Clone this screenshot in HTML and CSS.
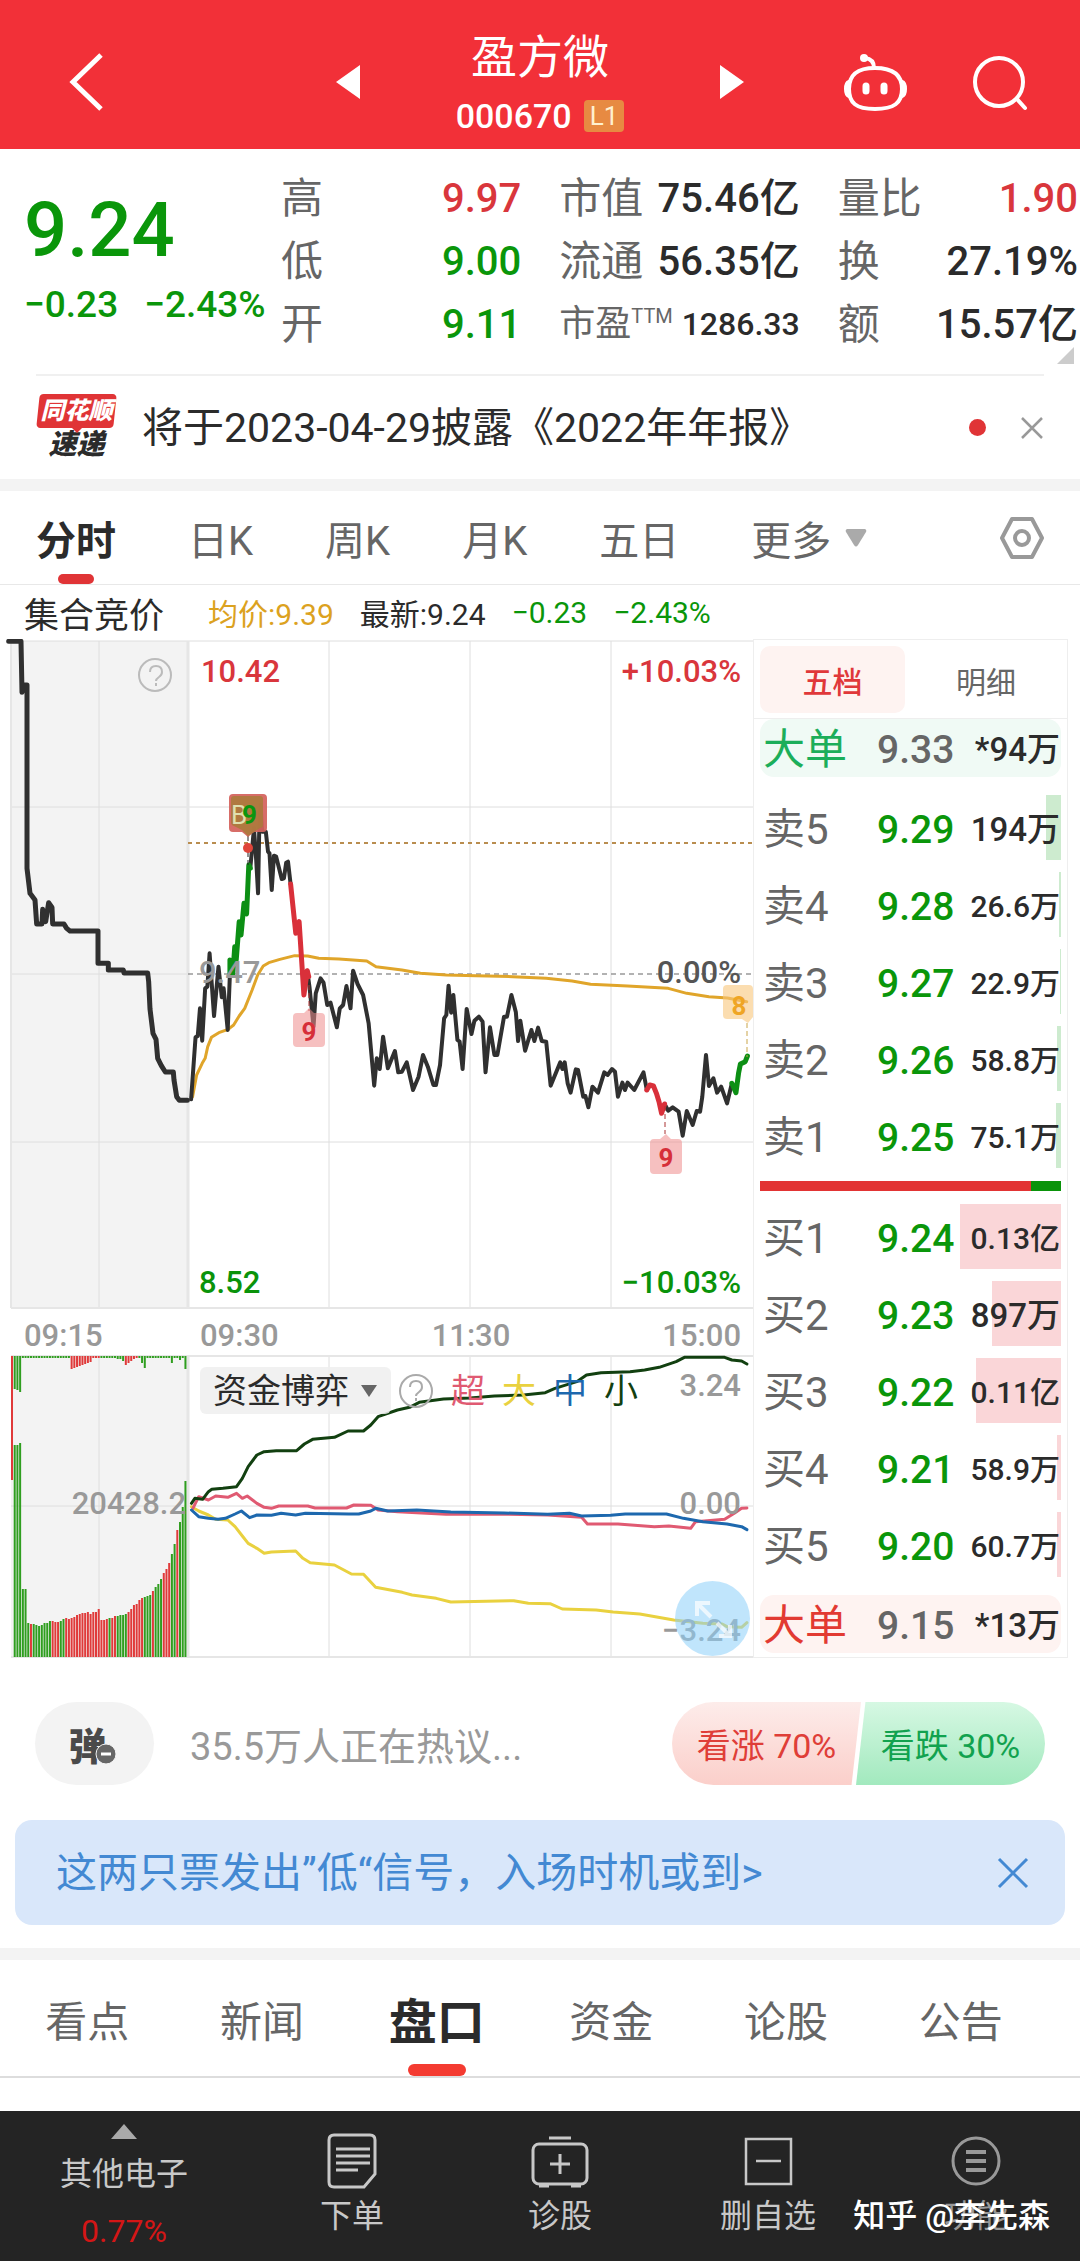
FILE: index.html
```html
<!DOCTYPE html>
<html lang="zh-CN">
<head>
    <meta charset="UTF-8">
    <meta name="viewport" content="width=device-width, initial-scale=1.0">
    <title>盈方微 000670</title>
    <link rel="stylesheet" href="styles.css">
</head>
<body>
    <header class="topbar">
        <button class="icon-btn back" aria-label="返回">
            <svg width="36" height="60" viewBox="0 0 36 60"><path d="M33 3 5 30l28 27" fill="none" stroke="#fff" stroke-width="5"/></svg>
        </button>
        <div class="switcher">
            <button class="icon-btn" aria-label="上一只">
                <svg width="24" height="34" viewBox="0 0 24 34"><path d="M24 0v34L0 17z" fill="#fff"/></svg>
            </button>
            <div class="title">
                <h1>盈方微</h1>
                <div class="code">000670 <span class="level">L1</span></div>
            </div>
            <button class="icon-btn" aria-label="下一只">
                <svg width="24" height="34" viewBox="0 0 24 34"><path d="M0 0v34l24-17z" fill="#fff"/></svg>
            </button>
        </div>
        <div class="actions">
            <button class="icon-btn" aria-label="智能助手">
                <svg width="66" height="60" viewBox="0 0 66 60" fill="none" stroke="#fff" stroke-width="4" stroke-linecap="round">
                    <path d="M31 16c-17 0-26 6-26 21 0 14 7 20 26 20s27-6 27-20c0-15-10-21-27-21z"/>
                    <path d="M5 30q-3 1-3 7t3 7M58 30q3 1 3 7t-3 7"/>
                    <path d="M30 16q0-9-9-10"/>
                    <circle cx="20" cy="6" r="4" fill="#fff" stroke="none"/>
                    <path d="M22 34v5M40 34v5" stroke-width="7"/>
                </svg>
            </button>
            <button class="icon-btn" aria-label="搜索">
                <svg width="60" height="60" viewBox="0 0 60 60" fill="none" stroke="#fff" stroke-width="4" stroke-linecap="round">
                    <circle cx="27" cy="30" r="24"/>
                    <path d="m45 47 8 9"/>
                </svg>
            </button>
        </div>
    </header>

    <section class="quote">
        <div class="price">
            <div class="last">9.24</div>
            <div class="change"><span>−0.23</span><span>−2.43%</span></div>
        </div>
        <div class="stats">
            <dl>
                <div><dt>高</dt><dd class="up">9.97</dd></div>
                <div><dt>低</dt><dd class="down">9.00</dd></div>
                <div><dt>开</dt><dd class="down">9.11</dd></div>
            </dl>
            <dl>
                <div><dt>市值</dt><dd>75.46亿</dd></div>
                <div><dt>流通</dt><dd>56.35亿</dd></div>
                <div class="small"><dt>市盈<sup>TTM</sup></dt><dd>1286.33</dd></div>
            </dl>
            <dl>
                <div><dt>量比</dt><dd class="up">1.90</dd></div>
                <div><dt>换</dt><dd>27.19%</dd></div>
                <div><dt>额</dt><dd>15.57亿</dd></div>
            </dl>
        </div>
        <svg class="corner" width="17" height="17" viewBox="0 0 17 17"><path d="M17 0v17H0z" fill="#ccc"/></svg>
    </section>

    <section class="news">
        <div class="news-logo"><span class="brand">同花顺</span><span class="express">速递</span></div>
        <a class="news-text" href="#">将于2023-04-29披露《2022年年报》</a>
        <span class="dot"></span>
        <button class="icon-btn" aria-label="关闭">
            <svg width="24" height="24" viewBox="0 0 24 24"><path d="m2 2 20 20M22 2 2 22" stroke="#999" stroke-width="2.5"/></svg>
        </button>
    </section>

    <nav class="period">
        <button class="active">分时</button>
        <button>日K</button>
        <button>周K</button>
        <button>月K</button>
        <button>五日</button>
        <button class="more">更多
            <svg width="22" height="18" viewBox="0 0 22 18"><path d="M2 0h18q2 1 1 3l-8 13q-2 3-4 0L1 3Q0 1 2 0z" fill="#aaa"/></svg>
        </button>
        <button class="settings" aria-label="设置">
            <svg width="46" height="44" viewBox="0 0 46 44" fill="none" stroke="#999" stroke-width="4" stroke-linejoin="round">
                <path d="M13 3h20l10 19-10 19H13L3 22z"/>
                <circle cx="23" cy="22" r="7"/>
            </svg>
        </button>
    </nav>

    <div class="summary">
        <span class="auction">集合竞价</span>
        <span class="avg">均价:9.39</span>
        <span>最新:9.24</span>
        <span class="down">−0.23</span>
        <span class="down">−2.43%</span>
    </div>

    <main class="market">
        <div class="charts">
            <svg class="chart" viewBox="0 639 753 1020" role="img" aria-label="分时走势">
                <!-- grid -->
                <path d="M11 641h178v667H11zM11 1356h176v301H11z" fill="#f3f3f3"/>
                <g fill="none" stroke="#dedede">
                    <path d="M11 641h742M11 807h742M11 974h178M11 1142h742M99 641v667M329 641v667M470 641v667M611 641v667M99 1356v301M329 1356v301M470 1356v301M611 1356v301M11 1506h742"/>
                    <path d="M11 1308h742M11 1356h742M11 1657h742M11 641v667" stroke="#e6e6e6" stroke-width="2"/>
                    <path d="M188 641v667M188 1356v301" stroke="#e6e6e6" stroke-width="3"/>
                </g>
                <path d="M188 974h565" stroke="#999" stroke-width="1.5" stroke-dasharray="5 4"/>
                <path d="M188 843h565" stroke="#b98d4f" stroke-width="2" stroke-dasharray="4 4"/>

                <!-- call auction -->
                <svg x="0" y="630" width="400" height="500" viewBox="0 0 1200 1500" class="line">
                    <polyline class="ink auction-line" points="26,34 63,34 66,187 70,165 81,165 81,715 90,790 105,810 110,882 126,882 128,838 137,875 146,818 156,832 158,882 192,882 200,895 210,903 294,903 294,1000 325,1000 325,1020 370,1020 372,1029 443,1029 446,1055 450,1137 459,1210 468,1228 473,1285 484,1307 496,1326 520,1326 522,1350 530,1400 538,1411 562,1411"/>
                </svg>

                <!-- price and average -->
                <svg x="180" y="760" width="580" height="440" viewBox="0 0 1568 1320" preserveAspectRatio="none" class="line">
                    <polyline class="avg-line" points="34,1010 45,945 60,910 68,895 75,860 85,832 105,818 130,808 145,795 160,768 175,745 195,690 210,645 225,618 240,608 270,598 310,587 345,588 375,595 430,597 505,603 530,620 600,630 650,640 720,645 800,647 900,650 990,655 1060,663 1110,673 1210,678 1320,685 1370,700 1430,710 1480,714 1532,725"/>
                    <polyline class="ink" points="30,1018 42,832 48,828 54,745 60,842 68,685 74,680 80,580 92,768 104,620 113,712 118,685 129,810 135,640"/>
                    <polyline class="ink" points="190,325 200,205 206,300 211,400 214,220 218,135 222,215 232,215 238,275 242,280 248,390 254,287 260,290 275,357 281,355 287,308 292,305 299,372"/>
                    <polyline class="ink" points="344,632 350,680 361,800 367,700 380,655 388,668 398,735 407,728 424,802 432,745 441,735 450,678 461,745 468,632 480,672 495,705 510,790 525,977 532,895 540,927 549,830 562,925 581,873 590,937 600,935 613,907 630,990 645,950 657,885 670,920 685,975 692,975 703,915 714,775 720,765 726,677 733,758 739,705 750,840 756,845 764,927 775,747 788,822 796,782 808,770 818,785 826,937 838,802 850,885 858,885 876,770 884,770 896,705 908,757 914,843 920,782 933,872 950,810 958,843 968,803 978,843 990,845 1002,977 1028,907 1034,927 1040,907 1048,970 1056,998 1070,928 1076,930 1090,1010 1096,1008 1104,1042 1115,980 1130,998 1147,937 1156,945 1168,927 1176,935 1184,1010 1196,968 1203,990 1210,968 1228,990 1253,937 1262,990"/>
                    <polyline class="ink" points="1310,1032 1320,1052 1332,1042 1348,1055 1359,1127 1370,1053 1386,1095 1397,1053 1406,1055 1412,1010 1422,885 1430,978 1442,955 1452,998 1463,980 1479,1030 1492,970"/>
                    <polyline class="fall-line" points="135,640 135,600 143,640 148,560 152,600 160,485 165,525 173,430 180,462 186,315 190,325"/>
                    <polyline class="fall-line" points="1492,970 1503,998 1510,940 1515,912 1528,905 1534,888"/>
                    <polyline class="rise-line" points="299,372 313,520 322,485 335,705 344,632 348,650"/>
                    <polyline class="rise-line" points="1262,990 1270,975 1280,978 1288,1000 1295,1025 1302,1060 1310,1032"/>
                </svg>

                <!-- signal markers -->
                <g fill="none" stroke-dasharray="5 3">
                    <path d="M248 836v30" stroke="#222"/>
                    <path d="M309 985v26M665 1106v28" stroke="#a33"/>
                    <path d="M747 1023v34" stroke="#c9a54a"/>
                </g>
                <circle cx="248" cy="848" r="5" fill="#e0453a"/>
                <path d="M233 794h30q4 0 4 4v30q0 4-4 4h-9l-6 5-6-5h-9q-4 0-4-4v-30q0-4 4-4z" fill="#d4625c" fill-opacity=".93"/>
                <path d="M234 796h26q3 0 3 3v26q0 3-3 3l-6 4-6 4-6-6-8-4q-3-1-3-4v-23q0-3 3-3z" fill="#ac7a3c" fill-opacity=".9"/>
                <text x="231" y="824" class="mark pale">B</text>
                <text x="242" y="824" class="mark" fill="#0a960f">9</text>
                <path d="M297 1013h7l5-5 5 5h7q4 0 4 4v26q0 4-4 4h-24q-4 0-4-4v-26q0-4 4-4zM654 1139h6l6-5 5 5h7q4 0 4 4v27q0 4-4 4h-24q-4 0-4-4v-27q0-4 4-4z" fill="#ee8d8d" fill-opacity=".55"/>
                <text x="309" y="1041" class="mark" text-anchor="middle" fill="#d62f39">9</text>
                <text x="666" y="1167" class="mark" text-anchor="middle" fill="#d62f39">9</text>
                <path d="M727 985h22q4 0 4 4v28l-5 6-6-4h-15q-4 0-4-4v-26q0-4 4-4z" fill="#f8c77b" fill-opacity=".6"/>
                <text x="739" y="1015" class="mark" text-anchor="middle" fill="#efa524">8</text>

                <!-- auction volume, filled in by chart.js -->
                <g id="auctionVolume"></g>

                <!-- money flow -->
                <svg x="0" y="1160" width="760" height="500" viewBox="0 0 1568 1500" preserveAspectRatio="none" class="line flow">
                    <polyline stroke="#e9d13f" points="395,1040 410,1053 430,1065 445,1078 470,1080 485,1100 500,1128 512,1150 530,1165 545,1180 560,1176 610,1173 625,1195 640,1208 690,1215 725,1242 750,1243 775,1282 830,1297 850,1305 900,1315 930,1326 1060,1322 1090,1330 1135,1331 1160,1347 1230,1350 1265,1356 1320,1362 1390,1380 1450,1390 1490,1392 1500,1400 1530,1402 1541,1388"/>
                    <polyline stroke="#e05a72" points="398,1045 410,1010 430,1020 445,1008 470,1012 488,1000 500,1015 510,1008 530,1030 545,1042 560,1045 575,1038 635,1038 650,1044 715,1044 730,1035 765,1036 780,1050 820,1055 860,1058 920,1063 1020,1062 1130,1065 1200,1072 1212,1092 1275,1092 1350,1100 1380,1098 1425,1105 1435,1085 1495,1078 1515,1060 1530,1045 1541,1044"/>
                    <polyline stroke="#1d68ae" points="395,1050 410,1070 430,1075 450,1078 465,1075 485,1062 498,1053 515,1073 530,1065 560,1066 580,1060 610,1065 630,1060 720,1062 740,1062 765,1053 775,1045 800,1053 860,1050 930,1056 1040,1059 1130,1063 1175,1060 1200,1068 1260,1066 1290,1062 1375,1062 1410,1075 1450,1085 1500,1092 1530,1100 1541,1109"/>
                    <polyline stroke="#124010" points="395,1030 402,1015 418,1018 430,995 437,988 460,985 488,980 500,955 512,920 530,885 545,875 570,872 612,872 628,852 645,838 690,832 718,813 750,813 765,795 780,770 820,750 845,742 865,727 915,717 970,714 1020,708 1080,705 1125,698 1145,685 1190,665 1210,645 1240,638 1300,635 1330,630 1360,622 1395,605 1412,592 1495,592 1510,600 1530,603 1541,612"/>
                </svg>

                <!-- axis labels -->
                <g class="axis">
                    <text x="201" y="682" fill="#d9363c">10.42</text>
                    <text x="741" y="682" fill="#d9363c" text-anchor="end">+10.03%</text>
                    <text x="199" y="983">9.47</text>
                    <text x="741" y="983" fill="#555" text-anchor="end">0.00%</text>
                    <text x="199" y="1293" fill="#0a930a">8.52</text>
                    <text x="741" y="1293" fill="#0a930a" text-anchor="end">−10.03%</text>
                    <text x="24" y="1346">09:15</text>
                    <text x="200" y="1346">09:30</text>
                    <text x="471" y="1346" text-anchor="middle">11:30</text>
                    <text x="741" y="1346" text-anchor="end">15:00</text>
                    <text x="741" y="1396" text-anchor="end">3.24</text>
                    <text x="186" y="1514" text-anchor="end">20428.2</text>
                    <text x="741" y="1514" text-anchor="end">0.00</text>
                    <text x="741" y="1641" text-anchor="end">−3.24</text>
                </g>
                <g fill="none" stroke="#bbb" stroke-width="2">
                    <circle cx="155" cy="675" r="16"/>
                    <path d="M150 672q0-6 6-6t6 6q0 3-3 5t-3 4M156 683v3"/>
                </g>
            </svg>

            <div class="flow-bar">
                <select aria-label="副图指标">
                    <option>资金博弈</option>
                </select>
                <svg width="36" height="36" viewBox="0 0 36 36" fill="none" stroke="#aaa" stroke-width="2">
                    <circle cx="18" cy="18" r="16"/>
                    <path d="M12 14q0-6 6-6t6 6q0 3-3 5t-3 4M18 25v3"/>
                </svg>
                <span class="super">超</span>
                <span class="large">大</span>
                <span class="medium">中</span>
                <span class="retail">小</span>
            </div>

            <button class="expand" aria-label="全屏">
                <svg width="40" height="40" viewBox="0 0 40 40" fill="none" stroke="#fff" stroke-width="4" stroke-opacity=".7">
                    <path d="M4 17V4h13M4 4l14 14M37 26v11H26M37 37 24 24"/>
                </svg>
            </button>
        </div>

        <aside class="book">
            <div class="book-tabs">
                <button class="active">五档</button>
                <button>明细</button>
            </div>
            <table>
                <tr class="big sell"><th scope="row">大单</th><td>9.33</td><td class="vol whole">*94万</td></tr>
            </table>
            <table class="levels">
                <tr><th scope="row">卖5</th><td>9.29</td><td class="vol whole ask"><i style="width: 15px"></i><span>194万</span></td></tr>
                <tr><th scope="row">卖4</th><td>9.28</td><td class="vol ask"><i style="width: 2px"></i><span>26.6万</span></td></tr>
                <tr><th scope="row">卖3</th><td>9.27</td><td class="vol ask"><i style="width: 1px"></i><span>22.9万</span></td></tr>
                <tr><th scope="row">卖2</th><td>9.26</td><td class="vol ask"><i style="width: 4px"></i><span>58.8万</span></td></tr>
                <tr><th scope="row">卖1</th><td>9.25</td><td class="vol ask"><i style="width: 5px"></i><span>75.1万</span></td></tr>
            </table>
            <div class="ratio"><div style="width: 90%"></div></div>
            <table class="levels">
                <tr><th scope="row">买1</th><td>9.24</td><td class="vol bid"><i style="width: 101px"></i><span>0.13亿</span></td></tr>
                <tr><th scope="row">买2</th><td>9.23</td><td class="vol whole bid"><i style="width: 69px"></i><span>897万</span></td></tr>
                <tr><th scope="row">买3</th><td>9.22</td><td class="vol bid"><i style="width: 85px"></i><span>0.11亿</span></td></tr>
                <tr><th scope="row">买4</th><td>9.21</td><td class="vol bid"><i style="width: 4px"></i><span>58.9万</span></td></tr>
                <tr><th scope="row">买5</th><td>9.20</td><td class="vol bid"><i style="width: 4px"></i><span>60.7万</span></td></tr>
            </table>
            <table>
                <tr class="big buy"><th scope="row">大单</th><td>9.15</td><td class="vol whole">*13万</td></tr>
            </table>
        </aside>
    </main>

    <section class="discuss">
        <button class="danmu" aria-label="弹幕">弹
            <svg width="22" height="22" viewBox="0 0 22 22"><circle cx="11" cy="11" r="10" fill="#666" stroke="#f3f3f3"/><path d="M6 11h10" stroke="#fff" stroke-width="3"/></svg>
        </button>
        <a class="hot" href="#">35.5万人正在热议...</a>
        <div class="vote">
            <button class="bull">看涨 70%</button>
            <button class="bear">看跌 30%</button>
        </div>
    </section>

    <section class="banner">
        <a href="#">这两只票发出”低“信号，入场时机或到&gt;</a>
        <button class="icon-btn" aria-label="关闭">
            <svg width="32" height="32" viewBox="0 0 32 32"><path d="m2 2 28 28M30 2 2 30" stroke="#4389d3" stroke-width="3"/></svg>
        </button>
    </section>

    <nav class="sections">
        <button>看点</button>
        <button>新闻</button>
        <button class="active">盘口</button>
        <button>资金</button>
        <button>论股</button>
        <button>公告</button>
    </nav>

    <footer class="toolbar">
        <button class="sector">
            <svg width="26" height="15" viewBox="0 0 26 15"><path d="M13 0 26 15H0z" fill="#aaa"/></svg>
            <span>其他电子</span>
            <span class="pct">0.77%</span>
        </button>
        <button>
            <svg width="60" height="56" viewBox="0 0 60 56" fill="none" stroke="#c8c8c8" stroke-width="3">
                <path d="M12 2h36q5 0 5 5v34L42 54H12q-5 0-5-5V7q0-5 5-5zM14 16h34M14 23h34M14 30h34M14 37h22"/>
            </svg>
            <span>下单</span>
        </button>
        <button>
            <svg width="60" height="56" viewBox="0 0 60 56" fill="none" stroke="#c8c8c8" stroke-width="3">
                <rect x="3" y="11" width="54" height="40" rx="6"/>
                <path d="M19 5h22M30 21v20M20 31h20M9 53h10M41 53h10"/>
            </svg>
            <span>诊股</span>
        </button>
        <button>
            <svg width="60" height="56" viewBox="0 0 60 56" fill="none" stroke="#c8c8c8" stroke-width="2.5">
                <path d="M8 6h45v45H8zM18 28h25"/>
            </svg>
            <span>删自选</span>
        </button>
        <button class="menu">
            <svg width="60" height="56" viewBox="0 0 60 56" fill="none" stroke="#999" stroke-width="3">
                <circle cx="30" cy="28" r="23"/>
                <path d="M20 19h20M20 28h20M20 37h20" stroke-width="4"/>
            </svg>
            <span>功能</span>
        </button>
        <div class="watermark">知乎 @李先森</div>
    </footer>

    <script src="chart.js"></script>
</body>
</html>
```
FILE: chart.js
```js
// Call auction volume: one bar every 2.7 units, top and bottom edge per bar
const RED = '#e03a3a';
const GREEN = '#2f9e1f';
const BOTTOM = 1657;
const TOP = 1356;

const matched = [
    301, 212, 212, 214, 68, 68, 34, 33, 33, 32, 31, 32, 34, 34, 36, 36,
    35, 35, 36, 38, 39, 38, 39, 40, 42, 43, 44, 44, 45, 43, 45, 45, 48,
    37, 37, 38, 39, 39, 41, 41, 42, 42, 43, 45, 48, 52, 53, 57, 59, 60,
    61, 62, 66, 70, 73, 78, 84, 88, 94, 103, 113, 127, 135, 150, 176
];
const matchedColor = 'RGGGGGGRGGGGGGGRRRGGRRRRRRRRRRRRRRRRGRRGGGGRRRRRRGGGRGGGRRRGGRGGG';

const unmatched = [
    0, 33, 34, 36, 2, 2, 2, 2, 2, 2, 2, 2, 2, 2, 2, 2,
    2, 2, 2, 2, 2, 2, 13, 12, 11, 10, 9, 8, 7, 6, 2, 2, 2,
    2, 2, 2, 2, 2, 2, 3, 3, 5, 9, 7, 5, 3, 2, 2, 7, 12,
    2, 2, 2, 2, 2, 2, 2, 2, 2, 7, 2, 2, 4, 2, 13
];

function bar(x, y, height, color) {
    const rect = document.createElementNS('http://www.w3.org/2000/svg', 'rect');
    rect.setAttribute('x', x);
    rect.setAttribute('y', y);
    rect.setAttribute('width', 2);
    rect.setAttribute('height', height);
    rect.setAttribute('fill', color);
    return rect;
}

const group = document.getElementById('auctionVolume');
group.appendChild(bar(11, TOP, 124, RED));

matched.forEach((height, i) => {
    if (i === 0) return;
    const x = 11 + i * 2.71;
    group.appendChild(bar(x, BOTTOM - height, height, matchedColor[i] === 'R' ? RED : GREEN));
    const isRed = (i >= 22 && i <= 32) || (i >= 42 && i <= 46);
    group.appendChild(bar(x, TOP, unmatched[i], isRed ? RED : GREEN));
});
```
FILE: styles.css
```css
:root {
    --red: #f23038;
    --up: #d9363c;
    --down: #0a960a;
    --text: #2b2b2b;
    --muted: #666;
    --line: #e8e8e8;
    --band: #f3f3f3;
}

* {
    box-sizing: border-box;
}

body {
    margin: 0;
    min-height: 100vh;
    display: flex;
    flex-direction: column;
    font-family: Roboto, "Noto Sans CJK SC", sans-serif;
    color: var(--text);
    background: #fff;
}

button {
    border: 0;
    padding: 0;
    background: none;
    font: inherit;
    color: inherit;
    white-space: nowrap;
}

a {
    color: inherit;
    text-decoration: none;
}

svg {
    display: block;
}

.up {
    color: var(--up);
}

.down {
    color: var(--down);
}

/* header */
.topbar {
    display: grid;
    grid-template-columns: 1fr auto 1fr;
    height: 149px;
    padding: 14px 48px 0;
    background: var(--red);
    color: #fff;
}

.icon-btn {
    display: flex;
    align-items: center;
}

.back {
    padding-left: 20px;
}

.switcher {
    display: flex;
    gap: 84px;
}

.title {
    width: 192px;
    padding-top: 17px;
    text-align: center;
}

.title h1 {
    margin: 0;
    font-size: 46px;
    font-weight: 400;
    line-height: 52px;
}

.code {
    display: flex;
    align-items: center;
    justify-content: center;
    gap: 12px;
    margin-top: 3px;
    font-size: 34px;
    font-weight: 500;
    line-height: 60px;
}

.level {
    padding: 0 6px;
    border-radius: 4px;
    background: #e78a42;
    color: #fff0d0;
    font-size: 26px;
    font-weight: 400;
    line-height: 32px;
}

.actions {
    display: flex;
    justify-content: flex-end;
    gap: 62px;
}

/* quote */
.quote {
    position: relative;
    display: flex;
    padding: 18px 2px 18px 24px;
}

.price {
    width: 257px;
    padding-top: 18px;
    color: var(--down);
    font-weight: 500;
}

.last {
    font-size: 76px;
    line-height: 90px;
}

.change {
    display: flex;
    gap: 26px;
    font-size: 37px;
    line-height: 60px;
}

.stats {
    flex: 1;
    display: grid;
    grid-template-columns: repeat(3, 1fr);
    gap: 38px;
}

.stats dl {
    margin: 0;
    font-size: 40px;
}

.stats dl div {
    display: flex;
    justify-content: space-between;
    line-height: 63px;
    white-space: nowrap;
}

.stats dt {
    color: var(--muted);
    font-size: 42px;
}

.stats dd {
    margin: 0;
    font-weight: 500;
}

.stats .small dt {
    font-size: 36px;
}

.stats .small dd {
    font-size: 32px;
}

.stats sup {
    font-size: 20px;
    line-height: 1;
}

.corner {
    position: absolute;
    right: 6px;
    bottom: 10px;
}

/* news */
.news {
    display: flex;
    align-items: center;
    height: 105px;
    margin: 0 36px;
    border-top: 2px solid #f0f0f0;
}

.news-logo {
    width: 81px;
    margin-right: 25px;
    text-align: center;
    font-style: italic;
    font-weight: 900;
    font-size: 24px;
}

.news-logo span {
    display: block;
}

.brand {
    position: relative;
    z-index: 0;
    color: #fff;
    line-height: 34px;
}

.brand::before {
    content: "";
    position: absolute;
    inset: 0 2px;
    z-index: -1;
    border-radius: 4px;
    background: #e03436;
    transform: skewX(-6deg);
}

.brand::after {
    content: "";
    position: absolute;
    left: 35px;
    top: 33px;
    z-index: -1;
    border: 6px solid transparent;
    border-top-color: #e03436;
    border-bottom: 0;
}

.express {
    font-size: 28px;
    line-height: 34px;
}

.news-text {
    flex: 1;
    font-size: 41px;
    line-height: 60px;
}

.dot {
    width: 17px;
    height: 17px;
    margin-right: 34px;
    border-radius: 50%;
    background: #e03436;
}

/* period tabs */
.period {
    display: flex;
    gap: 72px;
    height: 106px;
    padding: 0 35px 0 36px;
    border-top: 12px solid var(--band);
    border-bottom: 1px solid var(--line);
    color: var(--muted);
    font-size: 40px;
}

.period .active,
.sections .active {
    position: relative;
    color: var(--text);
    font-weight: 700;
}

.period .active::after {
    content: "";
    position: absolute;
    left: 50%;
    bottom: 0;
    width: 36px;
    height: 10px;
    margin-left: -18px;
    border-radius: 5px;
    background: #e03436;
}

.more {
    display: flex;
    align-items: center;
    gap: 14px;
}

.settings {
    margin-left: auto;
}

.summary {
    display: flex;
    align-items: center;
    gap: 26px;
    height: 54px;
    padding-left: 24px;
    font-size: 30px;
}

.auction {
    margin-right: 18px;
    font-size: 35px;
}

.avg {
    color: #dca21f;
}

/* charts */
.market {
    display: grid;
    grid-template-columns: 1fr 315px;
    align-items: start;
    padding-right: 12px;
}

.charts {
    position: relative;
}

.chart {
    width: 100%;
    height: auto;
}

.line polyline {
    fill: none;
    stroke-width: 4;
    stroke-linejoin: round;
    stroke-linecap: round;
    vector-effect: non-scaling-stroke;
}

.line .ink {
    stroke: #303030;
}

.line .auction-line {
    stroke-width: 5;
}

.line .avg-line {
    stroke: #e0a52a;
    stroke-width: 3;
}

.line .rise-line {
    stroke: #d9303a;
    stroke-width: 5;
}

.line .fall-line {
    stroke: #0c8f14;
    stroke-width: 5;
}

.flow polyline {
    stroke-width: 3;
}

.axis {
    fill: #999;
    font-size: 31px;
    font-weight: 500;
}

.mark {
    font-size: 26px;
    font-weight: 700;
}

.pale {
    fill: #dfe0b0;
    font-weight: 400;
}

.flow-bar {
    position: absolute;
    left: 200px;
    top: 728px;
    display: flex;
    align-items: center;
    gap: 17px;
    font-size: 34px;
    line-height: 46px;
}

.flow-bar select {
    appearance: none;
    width: 191px;
    height: 47px;
    margin-right: -10px;
    padding: 0 0 0 13px;
    border: 0;
    border-radius: 6px;
    background: rgba(238, 238, 238, 0.85);
    color: var(--text);
    font: inherit;
}

.flow-bar::before {
    content: "";
    position: absolute;
    left: 161px;
    top: 18px;
    border: 8px solid transparent;
    border-top: 12px solid #666;
    border-bottom: 0;
}

.super {
    color: #e05a72;
}

.large {
    color: #e9d13f;
}

.medium {
    color: #1d68ae;
}

.retail {
    color: #124010;
}

.expand {
    position: absolute;
    right: 3px;
    bottom: 3px;
    display: flex;
    align-items: center;
    justify-content: center;
    width: 75px;
    height: 75px;
    border-radius: 50%;
    background: rgba(140, 208, 250, 0.55);
}

/* order book */
.book {
    padding: 0 6px 4px;
    border: 1px solid #eee;
}

.book-tabs {
    display: grid;
    grid-template-columns: 145px 1fr;
    gap: 6px;
    height: 79px;
    margin: 0 -6px;
    padding: 6px 6px 5px;
    border-bottom: 1px solid #eee;
    color: var(--muted);
    font-size: 30px;
}

.book-tabs .active {
    border-radius: 10px;
    background: #fef3f1;
    color: #e0383a;
    font-weight: 500;
}

.book table {
    width: 100%;
    border-collapse: collapse;
    table-layout: fixed;
    line-height: 50px;
}

.book th {
    width: 117px;
    padding: 4px 0 0 3px;
    color: var(--muted);
    font-size: 42px;
    font-weight: 400;
    text-align: left;
}

.book td {
    width: 78px;
    padding: 4px 0 0;
    color: var(--down);
    font-size: 39px;
    font-weight: 500;
}

.book .vol {
    position: relative;
    width: auto;
    padding-right: 1px;
    color: var(--text);
    font-size: 30px;
    text-align: right;
    white-space: nowrap;
}

.book .whole {
    font-size: 33px;
}

.levels tr {
    height: 77px;
}

.book .levels {
    margin-top: 12px;
}

.vol i {
    position: absolute;
    right: 0;
    top: 6px;
    bottom: 6px;
}

.vol span {
    position: relative;
}

.ask i {
    background: #cdebcf;
}

.bid i {
    background: #fad6d8;
}

.big {
    height: 58px;
}

.book .big td {
    color: var(--muted);
}

.book .big .vol {
    color: var(--text);
}

.big th:first-child {
    border-radius: 14px 0 0 14px;
}

.big td:last-child {
    border-radius: 0 14px 14px 0;
}

.sell > * {
    background: #f0faf5;
}

.buy > * {
    background: #fef3f1;
}

.book .sell th {
    color: #1cae5a;
}

.book .buy th {
    color: #e23a32;
}

.ratio {
    height: 10px;
    margin: 7px 0;
    background: #0a930a;
}

.ratio div {
    height: 100%;
    background: #e23434;
}

.book .ratio + .levels {
    margin: 0 0 12px;
}

/* discussion */
.discuss {
    display: flex;
    align-items: center;
    margin-top: 43px;
    padding: 0 35px;
}

.danmu {
    position: relative;
    width: 119px;
    height: 83px;
    padding-right: 14px;
    border-radius: 42px;
    background: var(--band);
    color: #4a4a4a;
    font-size: 38px;
    font-weight: 900;
}

.danmu svg {
    position: absolute;
    left: 60px;
    top: 41px;
}

.hot {
    flex: 1;
    margin-left: 36px;
    color: #999;
    font-size: 38px;
}

.vote {
    display: flex;
    overflow: hidden;
    border-radius: 42px;
    font-size: 34px;
}

.vote button {
    width: 189px;
    height: 83px;
}

.bull {
    background: linear-gradient(#fdecea, #fbcfca);
    color: #df3e38;
    clip-path: polygon(0 0, 100% 0, 95% 100%, 0 100%);
}

.vote .bear {
    margin-left: -5px;
    background: linear-gradient(#d6f8e3, #a2e9be);
    color: #11a24f;
    clip-path: polygon(5% 0, 100% 0, 100% 100%, 0 100%);
}

.banner {
    display: flex;
    align-items: center;
    justify-content: space-between;
    height: 105px;
    margin: 35px 15px 23px;
    padding: 0 36px 0 41px;
    border-radius: 17px;
    background: #d9e7fa;
    color: #4389d3;
    font-size: 41px;
    line-height: 60px;
}

/* section tabs */
.sections {
    display: grid;
    grid-template-columns: repeat(6, 1fr);
    height: 130px;
    padding-right: 32px;
    border-top: 12px solid var(--band);
    border-bottom: 2px solid #ddd;
    color: var(--muted);
    font-size: 42px;
}

.sections .active {
    font-size: 48px;
}

.sections .active::after {
    content: "";
    position: absolute;
    left: 50%;
    bottom: 0;
    width: 58px;
    height: 12px;
    margin-left: -29px;
    border-radius: 6px;
    background: #f43b31;
}

/* bottom toolbar */
.toolbar {
    position: relative;
    display: grid;
    grid-template-columns: 248px repeat(4, 1fr);
    height: 150px;
    margin-top: auto;
    background: #242424;
    color: #c8c8c8;
    font-size: 32px;
    line-height: 44px;
}

.toolbar button {
    display: flex;
    flex-direction: column;
    align-items: center;
    gap: 5px;
    padding-top: 22px;
}

.toolbar .sector {
    gap: 13px;
    padding-top: 13px;
}

.pct {
    color: #d41616;
}

.toolbar .menu {
    color: #999;
}

.watermark {
    position: absolute;
    right: 30px;
    top: 83px;
    color: #fff;
    font-weight: 500;
}
```
